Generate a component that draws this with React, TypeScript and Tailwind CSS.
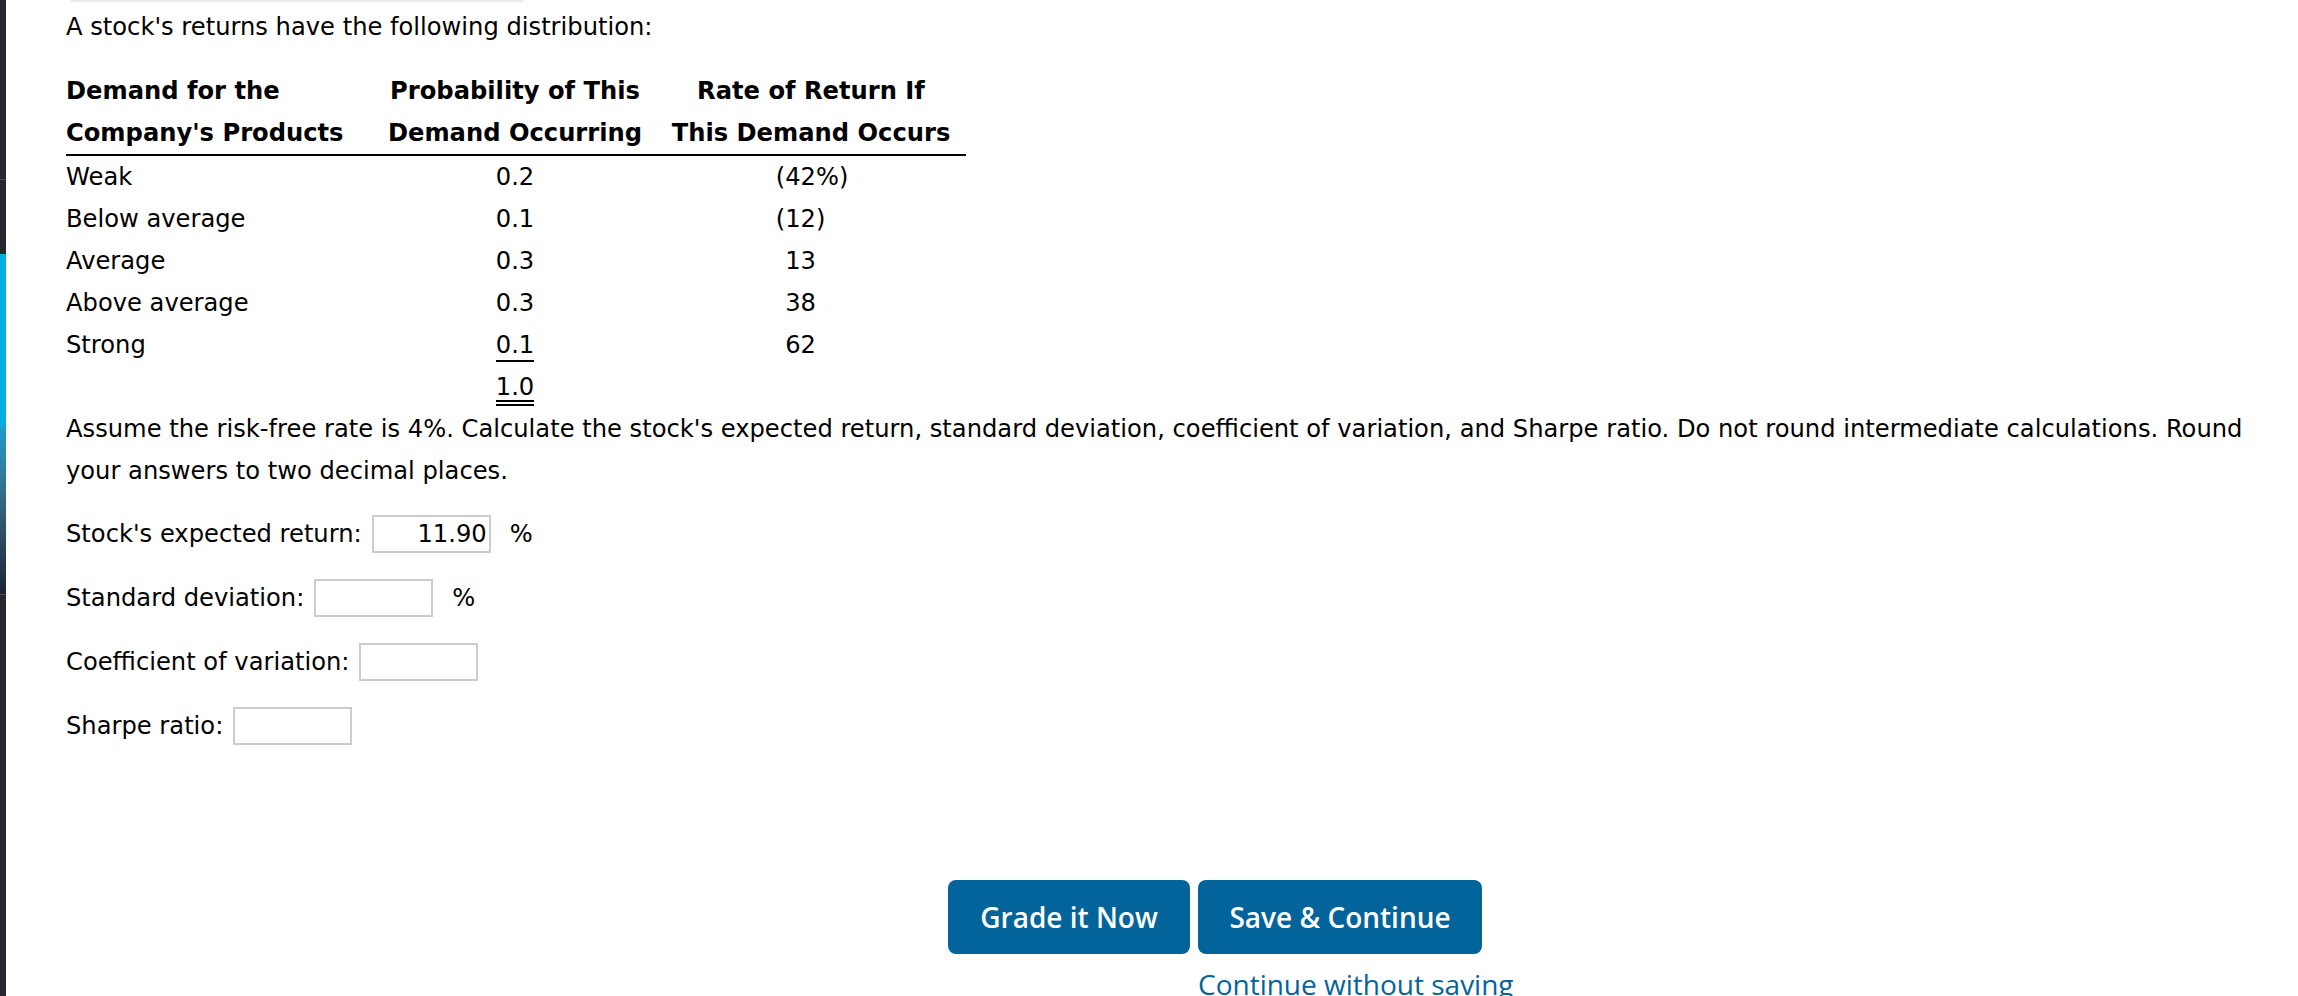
const rows = [
  { label: "Weak", prob: "0.2", main: "(42", suffix: "%)" },
  { label: "Below average", prob: "0.1", main: "(12", suffix: ")" },
  { label: "Average", prob: "0.3", main: "13", suffix: "" },
  { label: "Above average", prob: "0.3", main: "38", suffix: "" },
  { label: "Strong", prob: "0.1", main: "62", suffix: "", underline: true },
];

const answers = [
  { label: "Stock's expected return:", value: "11.90", unit: "%" },
  { label: "Standard deviation:", value: "", unit: "%" },
  { label: "Coefficient of variation:", value: "", unit: "" },
  { label: "Sharpe ratio:", value: "", unit: "" },
];

function SideStripe() {
  return (
    <div className="flex w-[6px] shrink-0 flex-col bg-[#25282c]">
      <div className="h-[179px]" />
      <div className="h-px bg-[#4a4d51]" />
      <div className="h-[74px]" />
      <div className="h-[172px] bg-[#00aee2]" />
      <div className="h-[168px] bg-gradient-to-b from-[#1a9fcc] via-[#33607c] to-[#1b2533]" />
      <div className="h-px bg-[#4a4d51]" />
    </div>
  );
}

function DistributionTable() {
  return (
    <div className="mt-[22px] w-[900px] leading-[42px]">
      <div className="grid grid-cols-[314px_270px_316px] border-b-2 border-black font-bold">
        <div>
          Demand for the
          <br />
          Company's Products
        </div>
        <div className="text-center">
          Probability of This
          <br />
          Demand Occurring
        </div>
        <div className="pl-[6px] text-center">
          Rate of Return If
          <br />
          This Demand Occurs
        </div>
      </div>
      {rows.map((r) => (
        <div key={r.label} className="grid grid-cols-[314px_270px_316px]">
          <div>{r.label}</div>
          <div className="text-center">
            {r.underline ? (
              <span className="inline-block border-b-2 border-black leading-[30px]">
                {r.prob}
              </span>
            ) : (
              r.prob
            )}
          </div>
          <div className="flex">
            <span className="w-[166px] text-right">{r.main}</span>
            <span>{r.suffix}</span>
          </div>
        </div>
      ))}
      <div className="grid grid-cols-[314px_270px_316px]">
        <div />
        <div className="text-center">
          <span className="inline-block border-b-[6px] border-double border-black leading-[26px]">
            1.0
          </span>
        </div>
        <div />
      </div>
    </div>
  );
}

function AnswerRow({ label, value, unit }: { label: string; value: string; unit: string }) {
  return (
    <div className="flex items-center">
      <span>{label}</span>
      <input
        readOnly
        value={value}
        className="ml-[10px] h-[38px] w-[119px] border-2 border-[#cccccc] bg-white pr-[2px] text-right text-black outline-none"
      />
      {unit && <span className="ml-[19px]">{unit}</span>}
    </div>
  );
}

export default function App() {
  return (
    <div className="flex h-[996px] overflow-hidden bg-white text-black">
      <SideStripe />
      <main className="flex-1 pl-[60px] pr-[20px] font-['DejaVu_Sans',Verdana,sans-serif] text-[24.2px]">
        <div className="ml-[5px] h-[3px] w-[452px] bg-gradient-to-b from-[#e4dfe0] to-white" />
        <p className="pt-[3px] leading-[42px]">A stock's returns have the following distribution:</p>
        <DistributionTable />
        <p className="leading-[42px]">
          Assume the risk-free rate is 4%. Calculate the stock's expected return, standard
          deviation, coefficient of variation, and Sharpe ratio. Do not round intermediate
          calculations. Round your answers to two decimal places.
        </p>
        <div className="mt-[23px] flex flex-col gap-[26px]">
          {answers.map((a) => (
            <AnswerRow key={a.label} {...a} />
          ))}
        </div>
        <div className="ml-[882px] mt-[135px] flex flex-col font-['Open_Sans',sans-serif]">
          <div className="flex gap-[8px]">
            <button className="h-[74px] w-[242px] rounded-[8px] bg-[#03639b] text-[28px] font-semibold text-white">
              Grade it Now
            </button>
            <button className="h-[74px] w-[284px] rounded-[8px] bg-[#03639b] text-[28px] font-semibold text-white">
              Save &amp; Continue
            </button>
          </div>
          <a className="ml-[250px] mt-[12px] text-[28px] leading-[36px] text-[#03639b]">
            Continue without saving
          </a>
        </div>
      </main>
    </div>
  );
}
